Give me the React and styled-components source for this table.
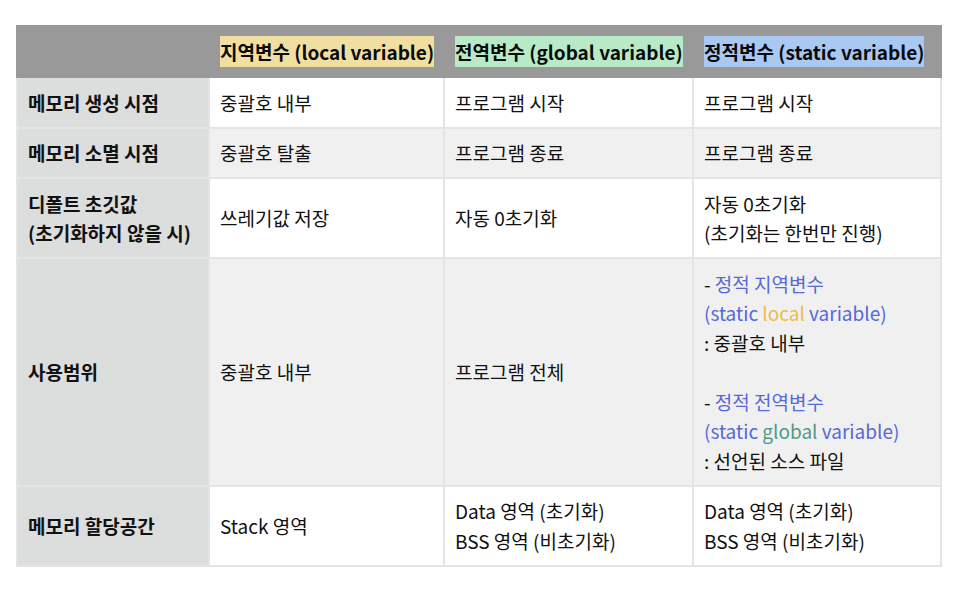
import styled, { createGlobalStyle } from 'styled-components';

const Global = createGlobalStyle`
  body {
    margin: 0;
    background: #fff;
    font-family: "Noto Sans CJK KR", "Noto Sans", sans-serif;
  }
`;

const Page = styled.div`
  padding: 25px 31px 0 16px;
`;

const Table = styled.table`
  width: 924px;
  border-collapse: collapse;
  table-layout: fixed;
  font-size: 19px;
  color: #111;
`;

const HeadCell = styled.th`
  background: #999999;
  height: 49px;
  padding: 0 10px;
  text-align: left;
  font-weight: 700;
  color: #0a0a0a;
  border: 2px solid #999999;
  white-space: nowrap;
`;

const Mark = styled.span`
  background: ${p => p.$bg};
  padding: 2px 0;
`;

const Row = styled.tr`
  background: ${p => (p.$alt ? '#f0f0f0' : '#ffffff')};
`;

const Label = styled.th`
  background: #dcdddd;
  text-align: left;
  font-weight: 700;
  padding: 9.5px 10px;
  line-height: 29.5px;
  border: 2px solid #e4e4e4;
`;

const Cell = styled.td`
  padding: 9.5px 10px;
  line-height: 29.5px;
  border: 2px solid #e4e4e4;
  vertical-align: middle;
`;

const Blue = styled.span`
  color: #5768d8;
`;

const Tint = styled.span`
  color: ${p => p.$c};
`;

const Lines = ({ items }) => items.map((t, i) => <div key={i}>{t}</div>);

export default function App() {
  return (
    <Page>
      <Global />
      <Table>
        <colgroup>
          <col style={{ width: 192 }} />
          <col style={{ width: 235 }} />
          <col style={{ width: 249 }} />
          <col style={{ width: 248 }} />
        </colgroup>
        <thead>
          <tr>
            <HeadCell />
            <HeadCell><Mark $bg="#f0dfa0">지역변수 (local variable)</Mark></HeadCell>
            <HeadCell><Mark $bg="#b8eac8">전역변수 (global variable)</Mark></HeadCell>
            <HeadCell><Mark $bg="#a9c8f2">정적변수 (static variable)</Mark></HeadCell>
          </tr>
        </thead>
        <tbody>
          <Row>
            <Label>메모리 생성 시점</Label>
            <Cell>중괄호 내부</Cell>
            <Cell>프로그램 시작</Cell>
            <Cell>프로그램 시작</Cell>
          </Row>
          <Row $alt>
            <Label>메모리 소멸 시점</Label>
            <Cell>중괄호 탈출</Cell>
            <Cell>프로그램 종료</Cell>
            <Cell>프로그램 종료</Cell>
          </Row>
          <Row>
            <Label><Lines items={['디폴트 초깃값', '(초기화하지 않을 시)']} /></Label>
            <Cell>쓰레기값 저장</Cell>
            <Cell>자동 0초기화</Cell>
            <Cell><Lines items={['자동 0초기화', '(초기화는 한번만 진행)']} /></Cell>
          </Row>
          <Row $alt>
            <Label>사용범위</Label>
            <Cell>중괄호 내부</Cell>
            <Cell>프로그램 전체</Cell>
            <Cell>
              <div>- <Blue>정적 지역변수</Blue></div>
              <div><Blue>(static <Tint $c="#ecbd4c">local</Tint> variable)</Blue></div>
              <div>: 중괄호 내부</div>
              <div>&nbsp;</div>
              <div>- <Blue>정적 전역변수</Blue></div>
              <div><Blue>(static <Tint $c="#4f9a86">global</Tint> variable)</Blue></div>
              <div>: 선언된 소스 파일</div>
            </Cell>
          </Row>
          <Row>
            <Label>메모리 할당공간</Label>
            <Cell>Stack 영역</Cell>
            <Cell><Lines items={['Data 영역 (초기화)', 'BSS 영역 (비초기화)']} /></Cell>
            <Cell><Lines items={['Data 영역 (초기화)', 'BSS 영역 (비초기화)']} /></Cell>
          </Row>
        </tbody>
      </Table>
    </Page>
  );
}
